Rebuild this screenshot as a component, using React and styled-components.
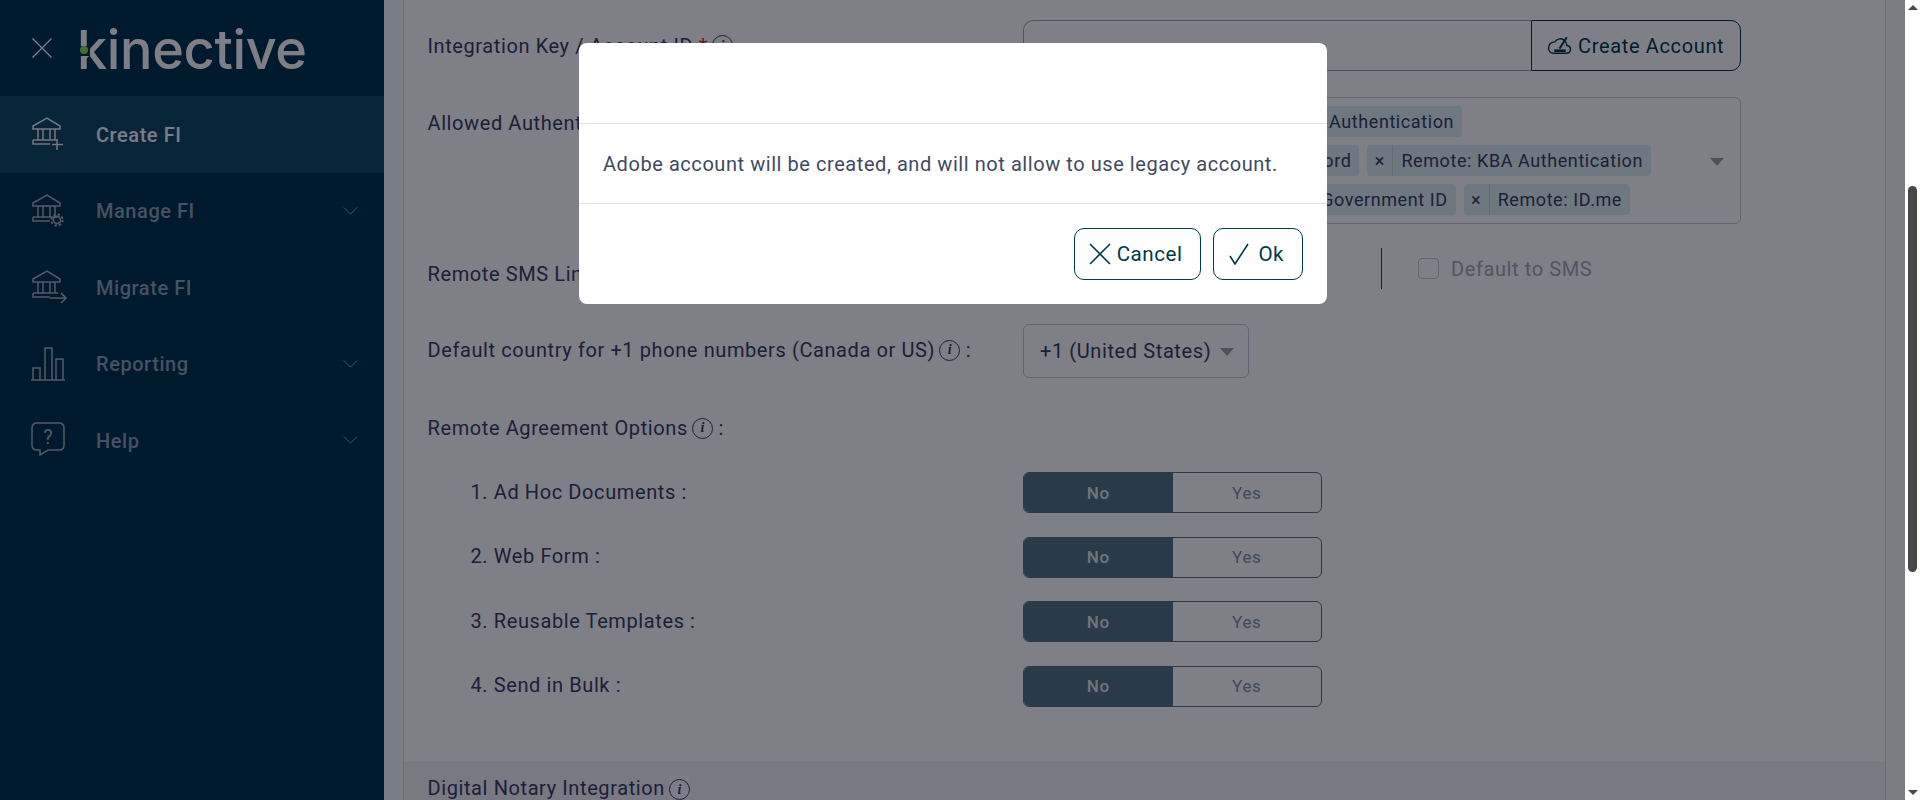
import styled, {createGlobalStyle} from "styled-components";

const GlobalStyle = createGlobalStyle`
  html, body {
    margin: 0;
    height: 100%;
    overflow: hidden;
  }

  body {
    font-family: Roboto, "Liberation Sans", sans-serif;
    background: #fff;
  }
`;

const BankBase = () => (
    <>
        <path d="M3 10 L17 2 L30 10 V13 H3 Z"/>
        <path d="M8 13 V24 M13 13 V24 M20 13 V24 M25 13 V24"/>
        <path d="M5 24 H28 M3 24 V28 H20 M3 24 H5"/>
    </>
);

const menuItems = [
    {id: "create", label: "Create FI", active: true},
    {id: "manage", label: "Manage FI", chevron: true},
    {id: "migrate", label: "Migrate FI"},
    {id: "reporting", label: "Reporting", chevron: true},
    {id: "help", label: "Help", chevron: true},
];

const agreementOptions = ["1. Ad Hoc Documents :", "2. Web Form :", "3. Reusable Templates :", "4. Send in Bulk :"];

const MenuGlyph = ({id}) => {
    if (id === "create") {
        return (
            <>
                <BankBase/>
                <path d="M27 23 V34 M22 28.5 H33"/>
            </>
        );
    }
    if (id === "manage") {
        return (
            <>
                <BankBase/>
                <circle cx="27" cy="27" r="3.6" strokeWidth="1.6"/>
                <circle cx="27" cy="27" r="5.6" strokeWidth="2" strokeDasharray="2.2 2.2"/>
            </>
        );
    }
    if (id === "migrate") {
        return (
            <>
                <BankBase/>
                <path d="M20 29 H36 M31 24 L36 29 L31 34"/>
            </>
        );
    }
    if (id === "reporting") {
        return <path d="M1 34 H35 M3 34 V22 H10 V34 M15 34 V2 H22 V34 M26 34 V13 H33 V34"/>;
    }
    return (
        <>
            <path d="M7 1 H29 Q34 1 34 6 V23 Q34 28 29 28 H18 L10 33 V28 H7 Q2 28 2 23 V6 Q2 1 7 1 Z"/>
            <QuestionMark x="18" y="22" textAnchor="middle">?</QuestionMark>
        </>
    );
}

const Tag = ({children}) => (
    <TagChip>
        <TagRemove>×</TagRemove>
        <TagText>{children}</TagText>
    </TagChip>
);

const Toggle = () => (
    <ToggleGroup>
        <ToggleOption $on>No</ToggleOption>
        <ToggleOption>Yes</ToggleOption>
    </ToggleGroup>
);

const App = () => {
    return (
        <Page>
            <GlobalStyle/>
            <Viewport>
                <Sidebar>
                    <LogoBar>
                        <CloseIcon viewBox="0 0 20 20">
                            <path d="M0.5 0.5 L19.5 19.5 M19.5 0.5 L0.5 19.5"/>
                        </CloseIcon>
                        <Logo>
                            kinective
                            <LogoGap/>
                            <LogoDot/>
                        </Logo>
                    </LogoBar>
                    {menuItems.map(item =>
                        <MenuItem key={item.id} $active={item.active}>
                            <MenuIcon $active={item.active} viewBox="0 0 38 36"><MenuGlyph id={item.id}/></MenuIcon>
                            <MenuLabel $active={item.active}>{item.label}</MenuLabel>
                            {item.chevron &&
                                <Chevron viewBox="0 0 16 9">
                                    <path d="M0.5 0.5 L8 8 L15.5 0.5"/>
                                </Chevron>}
                        </MenuItem>)
                    }
                </Sidebar>

                <Content>
                    <Card>
                        <FormRow>
                            <Label>Integration Key / Account ID <Required>*</Required><Info>i</Info></Label>
                            <InputGroup>
                                <TextField/>
                                <AccountButton>
                                    <CloudIcon viewBox="0 0 24 18">
                                        <path d="M6 16.5 H18.5 C21 16.5 22.5 14.8 22.5 12.7 C22.5 10.6 21 9.2 19 9 C18.8 7 18 5 16 3.6 C14.5 2.5 10 1.5 7.5 5.5 C3.5 5.5 1.5 8.5 1.5 11.5 C1.5 14.4 3.5 16.5 6 16.5 Z"/>
                                        <path d="M7 14 H18" strokeWidth="2.4"/>
                                        <path d="M12 12 L19 1" strokeWidth="1.8"/>
                                    </CloudIcon>
                                    Create Account
                                </AccountButton>
                            </InputGroup>
                        </FormRow>

                        <FormRow $gap={26} $top>
                            <Label $padTop={14}>Allowed Authentication Methods <Info>i</Info> :</Label>
                            <TagBox>
                                <TagRows>
                                    <TagRow $width={439}>
                                        <Tag>In-Person: Phone Authentication</Tag>
                                    </TagRow>
                                    <TagRow $width={628}>
                                        <Tag>Remote: Password</Tag>
                                        <Tag>Remote: KBA Authentication</Tag>
                                    </TagRow>
                                    <TagRow $width={607}>
                                        <Tag>Remote: Government ID</Tag>
                                        <Tag>Remote: ID.me</Tag>
                                    </TagRow>
                                </TagRows>
                                <Caret $right={16}/>
                            </TagBox>
                        </FormRow>

                        <FormRow $gap={24}>
                            <Label $padTop={10}>Remote SMS Link <Info>i</Info> :</Label>
                            <SmsOptions>
                                <Toggle/>
                                <VerticalRule/>
                                <CheckBox/>
                                <MutedText>Default to SMS</MutedText>
                            </SmsOptions>
                        </FormRow>

                        <FormRow $gap={35}>
                            <Label $padBottom={2}>Default country for +1 phone numbers (Canada or US)<Info>i</Info> :</Label>
                            <SelectBox>
                                +1 (United States)
                                <Caret $right={14}/>
                            </SelectBox>
                        </FormRow>

                        <SectionLabel>Remote Agreement Options<Info>i</Info> :</SectionLabel>

                        <OptionList>
                            {agreementOptions.map(option =>
                                <FormRow key={option}>
                                    <Label $indent $padBottom={1.5}>{option}</Label>
                                    <Toggle/>
                                </FormRow>)
                            }
                        </OptionList>

                        <SectionBand>
                            <Label>Digital Notary Integration<InfoSquare><Info $flush>i</Info></InfoSquare></Label>
                        </SectionBand>
                    </Card>
                </Content>

                <Overlay>
                    <Modal>
                        <ModalHeader/>
                        <ModalBody>Adobe account will be created, and will not allow to use legacy account.</ModalBody>
                        <ModalFooter>
                            <ModalButton>
                                <ButtonIcon viewBox="0 0 22 22">
                                    <path d="M1 1 L21 21 M21 1 L1 21"/>
                                </ButtonIcon>
                                Cancel
                            </ModalButton>
                            <ModalButton $iconGap={8}>
                                <ButtonIcon viewBox="0 0 20 22">
                                    <path d="M1 13 L6 21 L19 1"/>
                                </ButtonIcon>
                                Ok
                            </ModalButton>
                        </ModalFooter>
                    </Modal>
                </Overlay>
            </Viewport>

            <Scrollbar>
                <ScrollArrow/>
                <ScrollThumb/>
                <ScrollArrow $down/>
            </Scrollbar>
        </Page>
    );
}


const Page = styled.div`
  display: flex;
  height: 800px;
  width: 1920px;
  overflow: hidden;
`;

const Viewport = styled.div`
  position: relative;
  display: flex;
  flex: 1;
  min-width: 0;
`;

const Overlay = styled.div`
  position: absolute;
  inset: 0;
  background-color: rgba(0, 0, 18, 0.5);
`;

const Modal = styled.div`
  position: absolute;
  top: 43px;
  left: 579px;
  width: 748px;
  background-color: #ffffff;
  border-radius: 8px;
`;

const ModalHeader = styled.div`
  height: 80px;
  border-bottom: 1px solid #dee2e6;
`;

const ModalBody = styled.div`
  height: 79px;
  display: flex;
  align-items: center;
  padding: 0 24px;
  border-bottom: 1px solid #dee2e6;
  font-size: 20px;
  letter-spacing: 0.56px;
  color: #3f4a5f;
`;

const ModalFooter = styled.div`
  display: flex;
  justify-content: flex-end;
  gap: 12px;
  padding: 24px;
`;

const ModalButton = styled.button`
  display: flex;
  align-items: center;
  gap: ${({$iconGap}) => $iconGap || 6}px;
  height: 52px;
  padding: 0 18px 0 14px;
  background: #ffffff;
  border: 1px solid #003a46;
  border-radius: 10px;
  font-family: Roboto, sans-serif;
  font-size: 20.6px;
  letter-spacing: 0.5px;
  color: #003a46;
`;

const ButtonIcon = styled.svg`
  width: 22px;
  height: 22px;
  fill: none;
  stroke: #003a46;
  stroke-width: 1.6;
`;

const Sidebar = styled.nav`
  flex: 0 0 384px;
  background-color: #003448;
`;

const LogoBar = styled.div`
  display: flex;
  align-items: center;
  gap: 25px;
  height: 96px;
  padding-left: 32px;
`;

const CloseIcon = styled.svg`
  width: 20px;
  height: 20px;
  fill: none;
  stroke: #ffffff;
  stroke-width: 1.2;
`;

const Logo = styled.div`
  position: relative;
  margin-top: 4px;
  font-family: Inter, sans-serif;
  font-size: 54px;
  font-weight: 500;
  line-height: 60px;
  letter-spacing: -0.35px;
  color: #fcfcfc;
`;

const LogoGap = styled.span`
  position: absolute;
  left: 1px;
  top: 26px;
  width: 12px;
  height: 10px;
  background-color: #003448;
`;

const LogoDot = styled.span`
  position: absolute;
  left: 3px;
  top: 26px;
  width: 8px;
  height: 8px;
  border-radius: 50%;
  background-color: #8ce04a;
`;

const MenuItem = styled.div`
  display: flex;
  align-items: center;
  height: 76.5px;
  padding-left: 30px;
  background-color: ${({$active}) => $active ? "#104a5e" : "transparent"};
`;

const MenuIcon = styled.svg`
  flex: none;
  width: 38px;
  height: 36px;
  margin-right: 28px;
  fill: none;
  stroke: ${({$active}) => $active ? "#e8ecf0" : "#a8b2bc"};
  stroke-width: 1.5;
`;

const QuestionMark = styled.text`
  font-family: Roboto, sans-serif;
  font-size: 20px;
  fill: #a8b2bc;
  stroke: none;
`;

const MenuLabel = styled.span`
  flex: 1;
  padding-top: 1px;
  font-size: 20px;
  font-weight: 500;
  letter-spacing: 0.55px;
  color: ${({$active}) => $active ? "#f4f8fc" : "#8ea2b0"};
`;

const Chevron = styled.svg`
  flex: none;
  width: 15px;
  height: 8px;
  margin-right: 26px;
  fill: none;
  stroke: #a8b2bc;
  stroke-width: 1;
`;

const Content = styled.main`
  flex: 1;
  min-width: 0;
  padding: 0 19px;
  background-color: #f8f8f8;
  overflow: hidden;
`;

const Card = styled.div`
  height: 100%;
  padding-top: 20px;
  background-color: #ffffff;
  border-left: 1px solid #d8d8e0;
  border-right: 1px solid #d8d8e0;
  color: #38405e;
  font-size: 20px;
  letter-spacing: 0.6px;
`;

const FormRow = styled.div`
  display: grid;
  grid-template-columns: 595.5px 1fr;
  align-items: ${({$top}) => $top ? "start" : "center"};
  margin-top: ${({$gap}) => $gap || 0}px;
  padding-left: 23.5px;
`;

const Label = styled.div`
  padding-top: ${({$padTop}) => $padTop || 0}px;
  padding-bottom: ${({$padBottom}) => $padBottom || 0}px;
  padding-left: ${({$indent}) => $indent ? 43 : 0}px;
  line-height: 24px;
`;

const Required = styled.span`
  color: #d9232e;
`;

const Info = styled.span`
  display: inline-flex;
  align-items: center;
  justify-content: center;
  box-sizing: border-box;
  width: 21px;
  height: 21px;
  margin-left: ${({$flush}) => $flush ? 0 : 4}px;
  vertical-align: 3px;
  border: 1px solid #38405e;
  border-radius: 50%;
  font-family: "Liberation Serif", serif;
  font-style: italic;
  font-weight: 700;
  font-size: 14px;
  letter-spacing: 0;
  line-height: 1;
`;

const InfoSquare = styled.span`
  display: inline-block;
  margin-left: 4px;
  padding: 3px 0;
  line-height: 0;
  vertical-align: -2px;
  background-color: #fbfbfc;
`;

const InputGroup = styled.div`
  display: flex;
  width: 718px;
  height: 51px;
`;

const TextField = styled.div`
  flex: 1;
  border: 1px solid #a0a4b8;
  border-right: 0;
  border-radius: 10px 0 0 10px;
`;

const AccountButton = styled.div`
  display: flex;
  align-items: center;
  gap: 6px;
  flex: 0 0 210px;
  box-sizing: border-box;
  padding-left: 15px;
  border: 1px solid #003a46;
  border-radius: 0 10px 10px 0;
  font-size: 20px;
  letter-spacing: 0.65px;
  color: #003a46;
`;

const CloudIcon = styled.svg`
  width: 25px;
  height: 19px;
  fill: none;
  stroke: #003a46;
  stroke-width: 1.4;
`;

const TagBox = styled.div`
  position: relative;
  box-sizing: border-box;
  width: 718px;
  height: 127px;
  padding-top: 8px;
  border: 1px solid #c4c8d0;
  border-radius: 6px;
`;

const TagRows = styled.div`
  display: flex;
  flex-direction: column;
  gap: 8px;
`;

const TagRow = styled.div`
  display: flex;
  justify-content: flex-end;
  gap: 8px;
  width: ${({$width}) => $width - 1}px;
`;

const TagChip = styled.div`
  display: flex;
  flex: none;
  height: 31px;
  align-items: stretch;
  background-color: #dcf0ee;
  border-radius: 4px;
  font-size: 18px;
  letter-spacing: 0.58px;
  color: #38405e;
`;

const TagRemove = styled.span`
  display: flex;
  align-items: center;
  justify-content: center;
  width: 25px;
  border-right: 1px solid #c4d8dc;
`;

const TagText = styled.span`
  display: flex;
  align-items: center;
  padding: 0 8px;
`;

const Caret = styled.span`
  position: absolute;
  top: 50%;
  right: ${({$right}) => $right}px;
  margin-top: -3px;
  border-style: solid;
  border-width: 8px 7.5px 0;
  border-color: #a0a0a8 transparent transparent;
`;

const SmsOptions = styled.div`
  display: flex;
  align-items: center;
`;

const VerticalRule = styled.span`
  width: 1px;
  height: 41px;
  margin: 0 36px 0 59px;
  background-color: #38405e;
`;

const CheckBox = styled.span`
  box-sizing: border-box;
  width: 21px;
  height: 21px;
  margin-right: 12px;
  border: 1px solid #c4c8d0;
  border-radius: 4px;
`;

const MutedText = styled.span`
  color: #a4a8b4;
`;

const SelectBox = styled.div`
  position: relative;
  display: flex;
  align-items: center;
  box-sizing: border-box;
  width: 226px;
  height: 54px;
  padding-left: 16px;
  border: 1px solid #c4c8d0;
  border-radius: 6px;
`;

const SectionLabel = styled.div`
  margin-top: 38px;
  padding-left: 23.5px;
  line-height: 24px;
`;

const OptionList = styled.div`
  display: flex;
  flex-direction: column;
  gap: 23.5px;
  margin-top: 32px;
`;

const ToggleGroup = styled.div`
  display: flex;
  box-sizing: border-box;
  width: 299px;
  height: 41px;
  border: 1px solid #5a7080;
  border-radius: 6px;
  overflow: hidden;
  font-size: 17px;
`;

const ToggleOption = styled.div`
  flex: 1;
  display: flex;
  align-items: center;
  justify-content: center;
  font-weight: ${({$on}) => $on ? 500 : 400};
  background-color: ${({$on}) => $on ? "#527480" : "transparent"};
  color: ${({$on}) => $on ? "#e6e6e8" : "#8090a4"};
`;

const SectionBand = styled.div`
  margin-top: 54px;
  padding: 15px 23.5px;
  background-color: #f2f2f4;
`;

const Scrollbar = styled.div`
  position: relative;
  display: flex;
  flex: 0 0 15px;
  flex-direction: column;
  align-items: center;
  justify-content: space-between;
  background-color: #ffffff;
`;

const ScrollArrow = styled.span`
  margin: ${({$down}) => $down ? "0 0 5px" : "5px 0 0"};
  border-style: solid;
  border-width: ${({$down}) => $down ? "5px 5px 0" : "0 5px 5px"};
  border-color: ${({$down}) => $down ? "#4a4a4a transparent transparent" : "transparent transparent #4a4a4a"};
`;

const ScrollThumb = styled.span`
  position: absolute;
  top: 186px;
  right: 3px;
  width: 9px;
  height: 386px;
  border-radius: 5px;
  background-color: #484848;
`;


export default App;
